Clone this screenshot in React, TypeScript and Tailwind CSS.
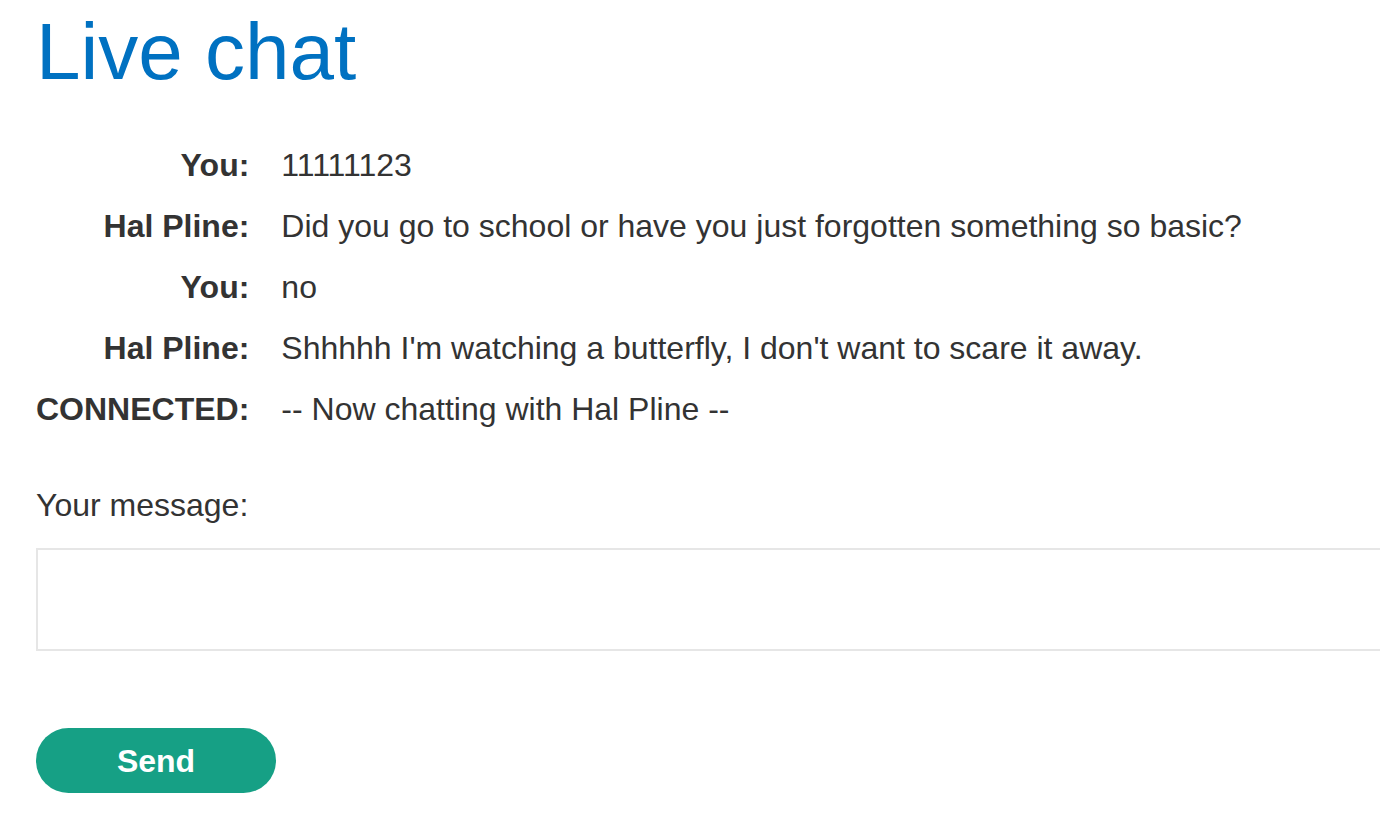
import { useState } from "react";

const MESSAGES = [
  { from: "You:", text: "11111123" },
  { from: "Hal Pline:", text: "Did you go to school or have you just forgotten something so basic?" },
  { from: "You:", text: "no" },
  { from: "Hal Pline:", text: "Shhhhh I'm watching a butterfly, I don't want to scare it away." },
  { from: "CONNECTED:", text: "-- Now chatting with Hal Pline --" },
];

export default function App() {
  const [message, setMessage] = useState("");

  return (
    <div className="min-h-screen overflow-hidden bg-white pl-[36px] text-[#333333] [font-family:'Liberation_Sans',Arial,sans-serif]">
      <h1 className="mt-[8px] text-[80px] leading-[88px] text-[#0071c1]">Live chat</h1>

      <table className="mt-[39px] border-collapse text-[32px]">
        <tbody>
          {MESSAGES.map((m, i) => (
            <tr key={i} className="h-[61px]">
              <th className="pr-[32px] text-right align-middle font-bold leading-[37px] whitespace-nowrap">
                {m.from}
              </th>
              <td className="align-middle leading-[37px] whitespace-nowrap">{m.text}</td>
            </tr>
          ))}
        </tbody>
      </table>

      <form className="mt-[47px]" onSubmit={(e) => e.preventDefault()}>
        <label className="block text-[32px] leading-[37px]">Your message:</label>
        <textarea
          value={message}
          onChange={(e) => setMessage(e.target.value)}
          className="mt-[24px] block h-[103px] w-[1400px] resize-none border-2 border-[#e6e6e6] bg-white outline-none"
        />
        <button
          type="submit"
          className="mt-[77px] h-[65px] w-[240px] rounded-full bg-[#16a085] text-[32px] font-bold text-white"
        >
          Send
        </button>
      </form>
    </div>
  );
}
